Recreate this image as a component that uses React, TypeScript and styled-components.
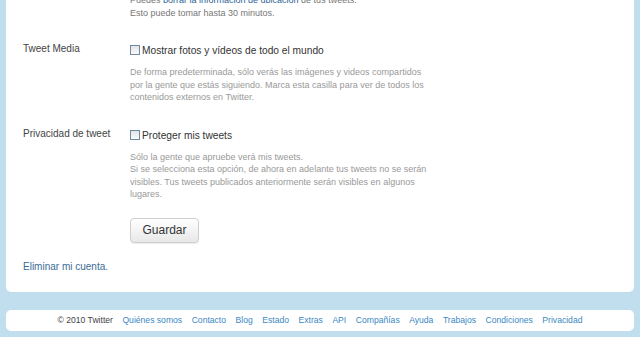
import React from "react";
import styled, { createGlobalStyle } from "styled-components";

const GlobalStyle = createGlobalStyle`
  html, body {
    margin: 0;
    padding: 0;
    background: #c0deed;
    overflow: hidden;
  }
  body {
    font-family: "Liberation Sans", Arial, sans-serif;
  }
`;

const Page = styled.div`
  display: flex;
  flex-direction: column;
  padding: 0 6px;
  height: 337px;
  box-sizing: border-box;
`;

const Panel = styled.div`
  background: #fff;
  border-radius: 0 0 5px 5px;
  margin-top: -16px;
  padding: 10px 17px 19px;
  display: flex;
  flex-direction: column;
`;

const SettingRow = styled.div<{ $gap?: number }>`
  display: grid;
  grid-template-columns: 107px 1fr;
  margin-top: ${(p) => p.$gap ?? 0}px;
`;

const Label = styled.div`
  font-size: 10px;
  line-height: 10px;
  color: #444;
  padding-top: 0;
`;

const Control = styled.div`
  display: flex;
  flex-direction: column;
`;

const CheckLine = styled.label`
  display: flex;
  align-items: flex-start;
  gap: 2px;
  font-size: 10.2px;
  line-height: 13px;
  color: #333;
`;

const Box = styled.span`
  width: 10px;
  height: 10px;
  margin-top: 1px;
  box-sizing: border-box;
  border: 1px solid #6f8ba3;
  background: linear-gradient(#e4e4e4, #fafafa);
  flex: none;
`;

const Desc = styled.p<{ $tone?: string; $top?: number }>`
  margin: ${(p) => p.$top ?? 0}px 0 0;
  font-size: 9px;
  line-height: 12.5px;
  color: ${(p) => p.$tone ?? "#999"};
  white-space: nowrap;
`;

const InlineLink = styled.a`
  color: #2d6496;
  text-decoration: none;
`;

const Button = styled.button`
  align-self: flex-start;
  margin-top: 17px;
  width: 69px;
  height: 25px;
  font-family: "Liberation Sans", Arial, sans-serif;
  font-size: 12px;
  color: #333;
  background: linear-gradient(#ffffff, #e8e8e8);
  border: 1px solid #cfcfcf;
  border-radius: 4px;
  box-shadow: 0 1px 1px rgba(0, 0, 0, 0.08);
  padding: 0;
`;

const DeleteLink = styled.a`
  margin-top: 17px;
  font-size: 10px;
  line-height: 13px;
  color: #3a6c98;
  text-decoration: none;
`;

const Footer = styled.div`
  margin-top: 18px;
  height: 21px;
  background: #fff;
  border-radius: 5px;
  display: flex;
  align-items: center;
  justify-content: center;
  gap: 9.5px;
  font-size: 8.6px;
`;

const FooterText = styled.span`
  color: #444;
`;

const FooterLink = styled.a`
  color: #3b88c3;
  text-decoration: none;
`;

const footerLinks = [
  "Quiénes somos",
  "Contacto",
  "Blog",
  "Estado",
  "Extras",
  "API",
  "Compañías",
  "Ayuda",
  "Trabajos",
  "Condiciones",
  "Privacidad",
];

export default function App() {
  return (
    <>
      <GlobalStyle />
      <Page>
        <Panel>
          <SettingRow>
            <div />
            <Control>
              <Desc $tone="#777">
                Puedes <InlineLink href="#">borrar la información de ubicación</InlineLink> de tus tweets.
                <br />
                Esto puede tomar hasta 30 minutos.
              </Desc>
            </Control>
          </SettingRow>

          <SettingRow $gap={25}>
            <Label>Tweet Media</Label>
            <Control>
              <CheckLine>
                <Box />
                Mostrar fotos y vídeos de todo el mundo
              </CheckLine>
              <Desc $top={9}>
                De forma predeterminada, sólo verás las imágenes y videos compartidos
                <br />
                por la gente que estás siguiendo. Marca esta casilla para ver de todos los
                <br />
                contenidos externos en Twitter.
              </Desc>
            </Control>
          </SettingRow>

          <SettingRow $gap={25}>
            <Label>Privacidad de tweet</Label>
            <Control>
              <CheckLine>
                <Box />
                Proteger mis tweets
              </CheckLine>
              <Desc $top={9}>
                Sólo la gente que apruebe verá mis tweets.
                <br />
                Si se selecciona esta opción, de ahora en adelante tus tweets no se serán
                <br />
                visibles. Tus tweets publicados anteriormente serán visibles en algunos
                <br />
                lugares.
              </Desc>
              <Button>Guardar</Button>
            </Control>
          </SettingRow>

          <DeleteLink href="#">Eliminar mi cuenta.</DeleteLink>
        </Panel>

        <Footer>
          <FooterText>© 2010 Twitter</FooterText>
          {footerLinks.map((l) => (
            <FooterLink key={l} href="#">
              {l}
            </FooterLink>
          ))}
        </Footer>
      </Page>
    </>
  );
}
